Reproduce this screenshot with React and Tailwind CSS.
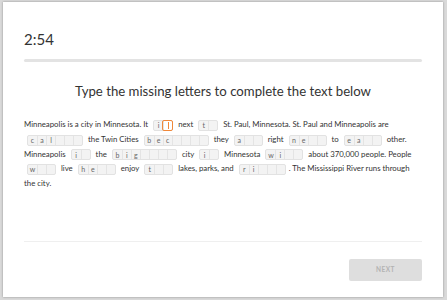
import React from 'react';

const Gap = ({ letters, total, focus }) => {
  const cells = [];
  for (let i = 0; i < total; i++) {
    const ch = letters[i] || '';
    const isFocus = focus === i;
    cells.push(
      <span
        key={i}
        className={
          'flex h-full w-[9px] items-center justify-center ' +
          (i > 0 ? 'border-l border-[#e4e4e4] ' : '') +
          (isFocus ? 'bg-white outline outline-[1.5px] outline-[#f0883a] rounded-[1px]' : '')
        }
      >
        {isFocus ? <span className="h-[7px] w-px bg-[#f0883a]" /> : ch}
      </span>
    );
  }
  return (
    <span className="mx-[3px] inline-flex h-[11px] translate-y-[1px] items-stretch rounded-[2px] border border-[#e2e2e2] bg-[#f3f3f3] align-baseline text-[7px] text-[#666]">
      {cells}
    </span>
  );
};

export default function App() {
  return (
    <div className="h-[300px] w-[447px] bg-[#d9d9d9] pb-[3px] pl-[3px] pr-[4px] pt-[2px]" style={{ fontFamily: 'Lato, "Open Sans", sans-serif' }}>
      <div className="flex h-full flex-col bg-white px-[21px] shadow-[0_0_2px_rgba(0,0,0,0.35)]">
        <div className="pt-[28px] text-[15px] leading-[18px] text-[#333]">2:54</div>
        <div className="mt-[11px] h-[3px] w-full rounded-full bg-[#e3e3e3]" />
        <h1 className="mt-[20px] text-center text-[13.2px] leading-[18px] text-[#333]">
          Type the missing letters to complete the text below
        </h1>
        <div className="mt-[17px] text-[7.8px] leading-[14.8px] text-[#333] whitespace-nowrap">
          <div>
            Minneapolis is a city in Minnesota. It <Gap letters="i" total={2} focus={1} /> next <Gap letters="t" total={2} /> St. Paul, Minnesota. St. Paul and Minneapolis are
          </div>
          <div>
            <Gap letters="cal" total={6} /> the Twin Cities <Gap letters="bec" total={7} /> they <Gap letters="a" total={3} /> right <Gap letters="ne" total={4} /> to <Gap letters="ea" total={4} /> other.
          </div>
          <div>
            Minneapolis <Gap letters="i" total={2} /> the <Gap letters="big" total={7} /> city <Gap letters="i" total={2} /> Minnesota <Gap letters="wi" total={4} /> about 370,000 people. People
          </div>
          <div>
            <Gap letters="w" total={3} /> live <Gap letters="he" total={4} /> enjoy <Gap letters="t" total={3} /> lakes, parks, and <Gap letters="ri" total={5} />. The Mississippi River runs through
          </div>
          <div>the city.</div>
        </div>
        <div className="flex-1" />
        <div className="h-px w-full bg-[#efefef]" />
        <div className="flex justify-end pb-[16px] pt-[17px]">
          <button className="h-[22px] w-[73px] rounded-[2px] bg-[#dedede] text-[6.5px] font-bold tracking-[0.5px] text-[#b3b3b3]">
            NEXT
          </button>
        </div>
      </div>
    </div>
  );
}
